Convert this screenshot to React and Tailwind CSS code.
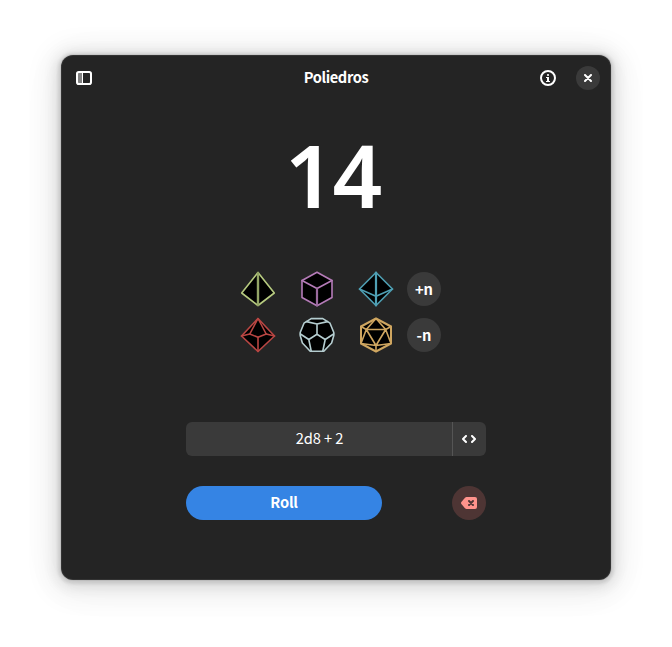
import React from "react";

const diceFrame = {
  width: 36,
  height: 36,
  viewBox: "0 0 36 36",
  strokeWidth: 1.6,
  strokeLinejoin: "round",
  strokeLinecap: "round",
  fill: "none",
};

function D4() {
  return (
    <svg {...diceFrame} stroke="#b7cb80">
      <path fill="#000" d="M18 1.5 34.3 22 18 34.5 1.7 22Z" />
      <path d="M18 2V34" strokeWidth="2.4" stroke="#93a566" />
    </svg>
  );
}

function D6() {
  return (
    <svg {...diceFrame} stroke="#b57bb8">
      <path fill="#000" d="M18 1.2 33 9.5V26.5L18 34.8 3 26.5V9.5Z" />
      <path d="M3 9.5 18 17.5 33 9.5" />
      <path d="M18 18V34.5" strokeWidth="2.2" stroke="#9a6a9d" />
    </svg>
  );
}

function D8() {
  return (
    <svg {...diceFrame} stroke="#4f9fb3">
      <path fill="#000" d="M18 1.5 34.5 18 18 34.5 1.5 18Z" />
      <path d="M1.5 18 18 25.3 34.5 18" />
      <path d="M18 1.5V34.5" strokeWidth="2.2" />
    </svg>
  );
}

function D10() {
  return (
    <svg {...diceFrame} stroke="#b94643">
      <path fill="#000" d="M18 1.5 34.5 19 18 34.5 1.5 19Z" />
      <path d="M18 1.5 9.8 17 18 20.3 26.2 17Z" />
      <path d="M1.5 19 9.8 17M34.5 19 26.2 17M18 20.3V34.5" />
    </svg>
  );
}

function D12() {
  return (
    <svg {...diceFrame} stroke="#b5cdd0">
      <path
        fill="#000"
        d="M12.2 1.6H23.8L31 6.2 34.8 15.5V18.5L32.6 26 24.8 34.2H11.2L3.4 26 1.2 18.5V15.5L5 6.2Z"
      />
      <path d="M7.5 4.6 18 7 28.5 4.6M18 7V17.3L9.8 22.5 1.4 17M18 17.3 26.2 22.5 34.6 17M9.8 22.5 12.2 34M26.2 22.5 23.8 34" />
    </svg>
  );
}

function D20() {
  return (
    <svg {...diceFrame} stroke="#cfa660">
      <path fill="#000" strokeWidth="2" d="M18 1.5 33 9.5V26.5L18 34.5 3 26.5V9.5Z" />
      <path d="M18 1.5 8.3 12.5H27.7ZM8.3 12.5 18 28.5 27.7 12.5M3 9.5 8.3 12.5 3 26.5 18 28.5 33 26.5 27.7 12.5 33 9.5M18 28.5V34.5" />
    </svg>
  );
}

function SidebarIcon() {
  return (
    <svg width="16" height="14" viewBox="0 0 16 14">
      <path fill="#828282" d="M2 2h4v10H2z" />
      <path fill="#fff" d="M6 2h1v10H6z" />
      <rect x="1" y="1" width="14" height="12" rx="1.8" fill="none" stroke="#fff" strokeWidth="2" />
    </svg>
  );
}

function InfoIcon() {
  return (
    <svg width="16" height="16" viewBox="0 0 16 16">
      <circle cx="8" cy="8" r="7" fill="none" stroke="#fff" strokeWidth="2" />
      <circle cx="8" cy="5" r="1.1" fill="#fff" />
      <path fill="#fff" d="M6 7h3v4h1v1H6v-1h1V8H6z" />
    </svg>
  );
}

function RoundButton({ children }) {
  return (
    <button className="flex size-[34px] items-center justify-center rounded-full bg-[#3a3a3a] text-[14.67px] leading-none font-bold">
      {children}
    </button>
  );
}

export default function App() {
  return (
    <div className="h-[647px] w-[672px] overflow-hidden bg-white pt-[55px] pl-[61px] font-['Noto_Sans_CJK_SC','Noto_Sans',sans-serif] text-white">
      <main className="flex h-[525px] w-[550px] flex-col rounded-xl bg-[#242424] shadow-[inset_0_0_0_1px_rgba(255,255,255,0.07),0_0_0_1px_rgba(0,0,0,0.05),0_1px_3px_3px_rgba(0,0,0,0.09),0_2px_14px_5px_rgba(0,0,0,0.09),0_4px_28px_12px_rgba(0,0,0,0.06),0_6px_50px_rgba(0,0,0,0.04)]">
        <header className="grid h-[46px] grid-cols-[1fr_auto_1fr] items-center pr-[11px] pl-[15px]">
          <button className="w-4" aria-label="Sidebar">
            <SidebarIcon />
          </button>
          <h1 className="mr-[4px] pb-[2px] text-[14.67px] leading-5 font-bold tracking-[-0.4px]">Poliedros</h1>
          <div className="flex items-center justify-end gap-5">
            <button aria-label="About">
              <InfoIcon />
            </button>
            <button className="flex size-6 items-center justify-center rounded-full bg-[#3a3a3a]" aria-label="Close">
              <svg width="8" height="8" viewBox="0 0 8 8" stroke="#fff" strokeWidth="2" strokeLinecap="round">
                <path d="M1 1 7 7M7 1 1 7" />
              </svg>
            </button>
          </div>
        </header>

        <div className="mt-[13px] h-[120px] pr-[7px] text-center font-['Noto_Sans',sans-serif] text-[87px] leading-[120px] font-semibold tracking-[-2px]">
          14
        </div>

        <div className="mt-[38px] ml-[179px] flex flex-col gap-3">
          <div className="flex h-[34px] items-center">
            <div className="mr-[13px] flex gap-[23px]">
              <D4 />
              <D6 />
              <D8 />
            </div>
            <RoundButton>+n</RoundButton>
          </div>
          <div className="flex h-[34px] items-center">
            <div className="mr-[13px] flex gap-[23px]">
              <D10 />
              <D12 />
              <D20 />
            </div>
            <RoundButton>-n</RoundButton>
          </div>
        </div>

        <div className="mt-[70px] ml-[125px] flex h-[34px] w-[300px] overflow-hidden rounded-md bg-[#3a3a3a] text-[14.67px]">
          <div className="flex flex-1 items-center justify-center pb-[3px] pl-px tracking-[-0.1px]">2d8 + 2</div>
          <button className="flex w-[34px] items-center justify-center border-l border-[#555] pr-px" aria-label="Commands">
            <svg width="14" height="8" viewBox="0 0 14 8" fill="none" stroke="#fff" strokeWidth="2" strokeLinecap="round" strokeLinejoin="round">
              <path d="M4 1 1 4 4 7M10 1 13 4 10 7" />
            </svg>
          </button>
        </div>

        <div className="mt-[30px] ml-[125px] flex w-[300px] justify-between">
          <button className="h-[34px] w-[196px] rounded-full bg-[#3584e4] pb-[3px] text-[14.67px] font-bold tracking-[-0.2px]">Roll</button>
          <button className="flex size-[34px] items-center justify-center rounded-full bg-[#4e3534]" aria-label="Clear">
            <svg width="16" height="12" viewBox="0 0 16 12">
              <path fill="#ff938c" d="M5.5 0H14a2 2 0 0 1 2 2v8a2 2 0 0 1-2 2H5.5Q4.7 12 4 11.3L.4 7Q-.4 6 .4 5L4 .7Q4.7 0 5.5 0Z" />
              <path stroke="#4e3534" strokeWidth="2" strokeLinecap="round" d="m8 4 4 4m0-4L8 8" />
            </svg>
          </button>
        </div>
      </main>
    </div>
  );
}
